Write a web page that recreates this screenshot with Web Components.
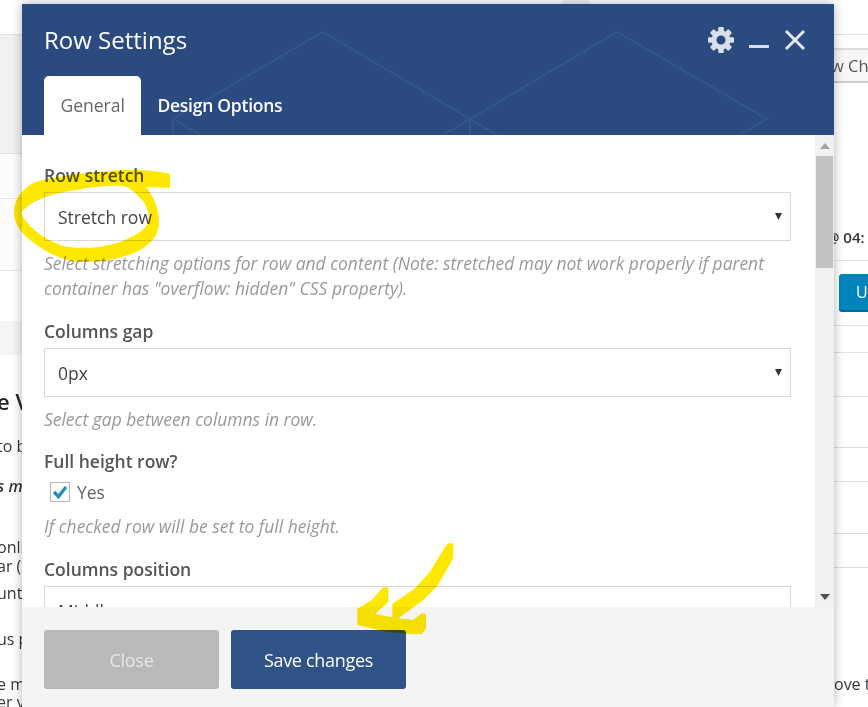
<!DOCTYPE html>
<html>
<head>
<meta charset="utf-8">
<title>Row Settings</title>
<style>
    html, body { margin: 0; height: 100%; overflow: hidden; background: #fff; }
    body { font-family: "Open Sans", "Liberation Sans", sans-serif; }
</style>
</head>
<body>
<wp-backdrop></wp-backdrop>
<row-modal title="Row Settings">
    <modal-tab slot="tabs" active>General</modal-tab>
    <modal-tab slot="tabs">Design Options</modal-tab>

    <form-field label="Row stretch" help="Select stretching options for row and content (Note: stretched may not work properly if parent container has &quot;overflow: hidden&quot; CSS property).">
        <fake-select>Stretch row</fake-select>
    </form-field>
    <form-field label="Columns gap" help="Select gap between columns in row." style="margin-top:1px;margin-bottom:-1px">
        <fake-select>0px</fake-select>
    </form-field>
    <form-field label="Full height row?" help="If checked row will be set to full height." style="margin-top:1px">
        <check-box>Yes</check-box>
    </form-field>
    <form-field label="Columns position" style="margin-top:1px">
        <fake-select>Middle</fake-select>
    </form-field>

    <modal-button slot="footer" kind="close">Close</modal-button>
    <modal-button slot="footer" kind="save">Save changes</modal-button>
</row-modal>
<marker-scribble></marker-scribble>

<script>
class WpBackdrop extends HTMLElement {
    constructor() {
        super();
        const shadow = this.attachShadow({ mode: 'open' });
        shadow.innerHTML = `
            <style>
                :host { display: grid; grid-template-columns: 60px 1fr 60px; height: 707px; overflow: hidden; color: #32373c; font-size: 16px; }
                .col { display: flex; flex-direction: column; min-width: 0; overflow: hidden; }
                .row { flex: none; box-sizing: border-box; border-bottom: 1px solid #e4e4e4; }
                .plain { border-bottom: none; }
                .grey { background: #f1f1f1; }
                .faint { background: #fcfcfc; }
                .soft { background: #f5f5f5; }
                .txt { flex: none; white-space: nowrap; margin-left: -3px; line-height: 18px; }
                .heading { font-size: 22px; font-weight: 600; color: #23282d; line-height: 30px; }
                .right { align-items: stretch; grid-column: 3; }
                .compare { flex: none; height: 35px; box-sizing: border-box; background: #f7f7f7; border-top: 2px solid #ddd; border-bottom: 2px solid #ccc; color: #555; font-size: 16.5px; line-height: 31px; white-space: nowrap; padding-left: 23px; }
                .time { flex: none; font-weight: 600; font-size: 15px; line-height: 20px; padding-left: 18px; white-space: nowrap; }
                .update { flex: none; margin-left: 31px; height: 38px; box-sizing: border-box; background: #0085ba; border-bottom: 2px solid #006a95; border-radius: 3px 0 0 3px; color: #fff; font-size: 16px; line-height: 36px; padding-left: 17px; }
                .ove { flex: none; font-size: 16px; line-height: 20px; padding-left: 26px; white-space: nowrap; }
                .tick { position: absolute; left: 562px; top: 0; width: 27px; height: 4px; background: #eee; }
            </style>
            <div class="col">
                <div class="row" style="height:35px"></div>
                <div class="row grey" style="height:119px"></div>
                <div class="row faint" style="height:45px"></div>
                <div class="row faint" style="height:72px"></div>
                <div class="row plain" style="height:50px"></div>
                <div class="row plain soft" style="height:34px"></div>
                <div class="txt heading" style="margin-top:31px">e V</div>
                <div class="txt" style="margin-top:21px">to b</div>
                <div class="txt" style="margin-top:22px;font-weight:600;font-style:italic">s m</div>
                <div class="txt" style="margin-top:43px">onli</div>
                <div class="txt" style="margin-top:1px">ar (</div>
                <div class="txt" style="margin-top:9px">unt</div>
                <div class="txt" style="margin-top:28px">us p</div>
                <div class="txt" style="margin-top:27px">e m</div>
                <div class="txt" style="margin-top:0">er v</div>
            </div>
            <div class="tick"></div>
            <div class="col right">
                <div class="row" style="height:35px"></div>
                <div class="compare" style="margin-top:13px">w Ch</div>
                <div class="time" style="margin-top:144px">@ 04:</div>
                <div class="row plain" style="height:14px;border-bottom:1px solid #e4e4e4"></div>
                <div class="update" style="margin-top:13px">U</div>
                <div class="row" style="height:14px"></div>
                <div class="row" style="height:27px"></div>
                <div class="row" style="height:44px"></div>
                <div class="row" style="height:51px;border-bottom-color:#ddd"></div>
                <div class="row" style="height:34px;border-bottom-color:#ddd"></div>
                <div class="row" style="height:52px;border-bottom-color:#ddd"></div>
                <div class="row" style="height:34px;border-bottom-color:#ddd"></div>
                <div class="ove" style="margin-top:106px">ove t</div>
            </div>
        `;
    }
}

class RowModal extends HTMLElement {
    constructor() {
        super();
        const shadow = this.attachShadow({ mode: 'open' });
        const template = document.createElement('template');
        template.innerHTML = `
            <style>
                :host { display: flex; flex-direction: column; position: absolute; left: 22px; top: 4px; width: 812px; height: 703px; background: #fff; box-shadow: 0 0 10px rgba(0, 0, 0, 0.3); overflow: hidden; }
                header { flex: none; height: 131px; box-sizing: border-box; background: #2b4b80; position: relative; overflow: hidden; display: flex; flex-direction: column; padding: 0 22px; }
                .pattern { position: absolute; left: 0; top: 0; width: 812px; height: 131px; }
                .top { position: relative; display: flex; align-items: center; justify-content: space-between; height: 72px; }
                h1 { margin: 0; font-size: 24px; font-weight: 400; color: #fff; line-height: 72px; }
                .tools { display: flex; align-items: center; gap: 14px; margin-right: 6px; margin-top: -1px; }
                .tools svg { display: block; }
                nav { position: relative; display: flex; gap: 16px; height: 59px; }
                .body { flex: 1; min-height: 0; display: flex; }
                .scroll { flex: 1; min-width: 0; overflow: hidden; box-sizing: border-box; padding: 29px 24px 0 22px; display: flex; flex-direction: column; gap: 18px; }
                .bar { flex: none; width: 19px; background: #f1f1f1; position: relative; display: flex; flex-direction: column; align-items: center; }
                .arrow { flex: none; height: 21px; display: flex; align-items: center; justify-content: center; }
                .thumb { flex: none; width: 17px; height: 112px; margin-top: 0; background: #c1c1c1; }
                .down { margin-top: auto; }
                footer { flex: none; height: 100px; box-sizing: border-box; background: #f4f4f4; display: flex; gap: 12px; padding: 23px 22px 0; position: relative; }
            </style>
            <header>
                <svg class="pattern" viewBox="0 0 812 131" fill="none" stroke="#34558a" stroke-width="2">
                    <path d="M151 115 L301 28 L448 115 L301 202 Z"/>
                    <path d="M448 115 L595 28 L745 115 L595 202 Z"/>
                    <path d="M151 115 V131 M448 115 V131"/>
                </svg>
                <div class="top">
                    <h1 id="title"></h1>
                    <div class="tools">
                        <svg width="26" height="26" viewBox="-13 -13 26 26" fill="#d9dfeb">
                            <rect x="-2.8" y="-13" width="5.6" height="26" rx="1.2"/>
                            <rect x="-2.8" y="-13" width="5.6" height="26" rx="1.2" transform="rotate(45)"/>
                            <rect x="-2.8" y="-13" width="5.6" height="26" rx="1.2" transform="rotate(90)"/>
                            <rect x="-2.8" y="-13" width="5.6" height="26" rx="1.2" transform="rotate(135)"/>
                            <circle r="9.5"/>
                            <circle r="4.5" fill="#2b4b80"/>
                        </svg>
                        <svg width="22" height="22" viewBox="0 0 22 22"><rect x="1" y="16" width="20" height="3" fill="#d9dfeb"/></svg>
                        <svg width="22" height="22" viewBox="0 0 22 22" fill="none" stroke="#e4e8f0" stroke-width="3"><path d="M2 2 L20 20 M20 2 L2 20"/></svg>
                    </div>
                </div>
                <nav><slot name="tabs"></slot></nav>
            </header>
            <div class="body">
                <div class="scroll"><slot></slot></div>
                <div class="bar">
                    <div class="arrow"><svg width="10" height="6" viewBox="0 0 10 6"><path d="M5 0 L10 6 H0 Z" fill="#a3a3a3"/></svg></div>
                    <div class="thumb"></div>
                    <div class="arrow down"><svg width="10" height="6" viewBox="0 0 10 6"><path d="M0 0 H10 L5 6 Z" fill="#505050"/></svg></div>
                </div>
            </div>
            <footer><slot name="footer"></slot></footer>
        `;
        shadow.appendChild(template.content.cloneNode(true));
        shadow.getElementById('title').textContent = this.getAttribute('title');
        this.removeAttribute('title');
    }
}

class ModalTab extends HTMLElement {
    constructor() {
        super();
        const shadow = this.attachShadow({ mode: 'open' });
        shadow.innerHTML = `
            <style>
                :host { display: block; font-size: 17.5px; line-height: 59px; font-weight: 600; color: #fff; letter-spacing: -0.25px; }
                :host([active]) { background: #fff; color: #666; font-weight: 400; padding: 0 16.5px; border-radius: 5px 5px 0 0; letter-spacing: 0; }
            </style>
            <slot></slot>
        `;
    }
}

class FormField extends HTMLElement {
    constructor() {
        super();
        const shadow = this.attachShadow({ mode: 'open' });
        shadow.innerHTML = `
            <style>
                :host { display: block; flex: none; }
                .label { font-size: 17.5px; font-weight: 600; color: #555; line-height: 23px; margin-bottom: 5px; }
                .help { font-size: 17.45px; font-style: italic; color: #999; line-height: 25px; margin-top: 10px; }
                .help:empty { display: none; }
            </style>
            <div class="label"></div>
            <slot></slot>
            <div class="help"></div>
        `;
        shadow.querySelector('.label').textContent = this.getAttribute('label');
        shadow.querySelector('.help').textContent = this.getAttribute('help') || '';
    }
}

class FakeSelect extends HTMLElement {
    constructor() {
        super();
        const shadow = this.attachShadow({ mode: 'open' });
        shadow.innerHTML = `
            <style>
                :host { display: flex; align-items: center; justify-content: space-between; box-sizing: border-box; height: 49px; background: #fff; border: 1px solid #d8d8d8; padding: 0 8px 0 13px; font-size: 17.5px; color: #444; }
                svg { display: block; margin-top: 0; }
            </style>
            <slot></slot>
            <svg width="7" height="7" viewBox="0 0 7 7"><path d="M0 0 H7 L3.5 7 Z" fill="#333"/></svg>
        `;
    }
}

class CheckBox extends HTMLElement {
    constructor() {
        super();
        const shadow = this.attachShadow({ mode: 'open' });
        shadow.innerHTML = `
            <style>
                :host { display: flex; align-items: center; gap: 7px; height: 24px; margin-left: 6px; margin-top: 7px; margin-bottom: 1px; font-size: 17.5px; color: #666; }
                .box { width: 20px; height: 20px; box-sizing: border-box; border: 1px solid #b4b9be; background: #fff; display: flex; align-items: center; justify-content: center; }
            </style>
            <span class="box"><svg width="16" height="14" viewBox="0 0 16 14" fill="none" stroke="#1e8cbe" stroke-width="3.2"><path d="M2 7 L6.5 11.5 L14 2"/></svg></span>
            <slot></slot>
        `;
    }
}

class ModalButton extends HTMLElement {
    constructor() {
        super();
        const shadow = this.attachShadow({ mode: 'open' });
        shadow.innerHTML = `
            <style>
                :host { display: flex; align-items: center; justify-content: center; width: 175px; height: 59px; border-radius: 3px; font-size: 18px; letter-spacing: -0.3px; }
                :host([kind="close"]) { background: #b9b9b9; color: #e6e6e6; }
                :host([kind="save"]) { background: #2f5287; color: #fff; }
            </style>
            <slot></slot>
        `;
    }
}

class MarkerScribble extends HTMLElement {
    constructor() {
        super();
        const shadow = this.attachShadow({ mode: 'open' });
        shadow.innerHTML = `
            <style>
                :host { display: block; position: absolute; left: 0; top: 0; width: 868px; height: 707px; pointer-events: none; mix-blend-mode: multiply; }
                svg { display: block; }
            </style>
            <svg width="868" height="707" viewBox="0 0 868 707" fill="#ffe800">
                <path fill-rule="evenodd" d="M170 174 L170 188 L146 187 C153 195 159 208 159 222 C159 236 150 244 140 250 C125 258 105 262 85 262 C65 262 48 254 30 240 C20 232 14 223 14 213 C14 200 20 191 33 183 C45 178 80 173 110 171 C130 169 155 170 170 174 Z M21 213 C26 224 40 238 63 246 C85 250 105 247 120 242 C135 236 146 230 148 222 C150 212 146 203 139 197 C135 192 130 188 124 186 C100 185 75 190 60 193 C45 196 28 203 21 213 Z"/>
                <path d="M447.7 543.3 L453.3 543.3 L453.3 558.3 L446.7 570 L436.7 586.7 L423.3 600 L398.3 618.3 L413.3 620 L421.7 613.3 L426 614 L426 628.3 L421.7 634 L413.3 634.3 L386.7 631.7 L357.3 625 L357.3 609 L371.7 600 L383.3 587.3 L388.3 587.3 L388.3 602.3 L375 614 L392.3 617.3 L392.3 604 L415 588.3 L430 571.7 L440 555 Z"/>
            </svg>
        `;
    }
}

customElements.define('wp-backdrop', WpBackdrop);
customElements.define('row-modal', RowModal);
customElements.define('modal-tab', ModalTab);
customElements.define('form-field', FormField);
customElements.define('fake-select', FakeSelect);
customElements.define('check-box', CheckBox);
customElements.define('modal-button', ModalButton);
customElements.define('marker-scribble', MarkerScribble);
</script>
</body>
</html>
